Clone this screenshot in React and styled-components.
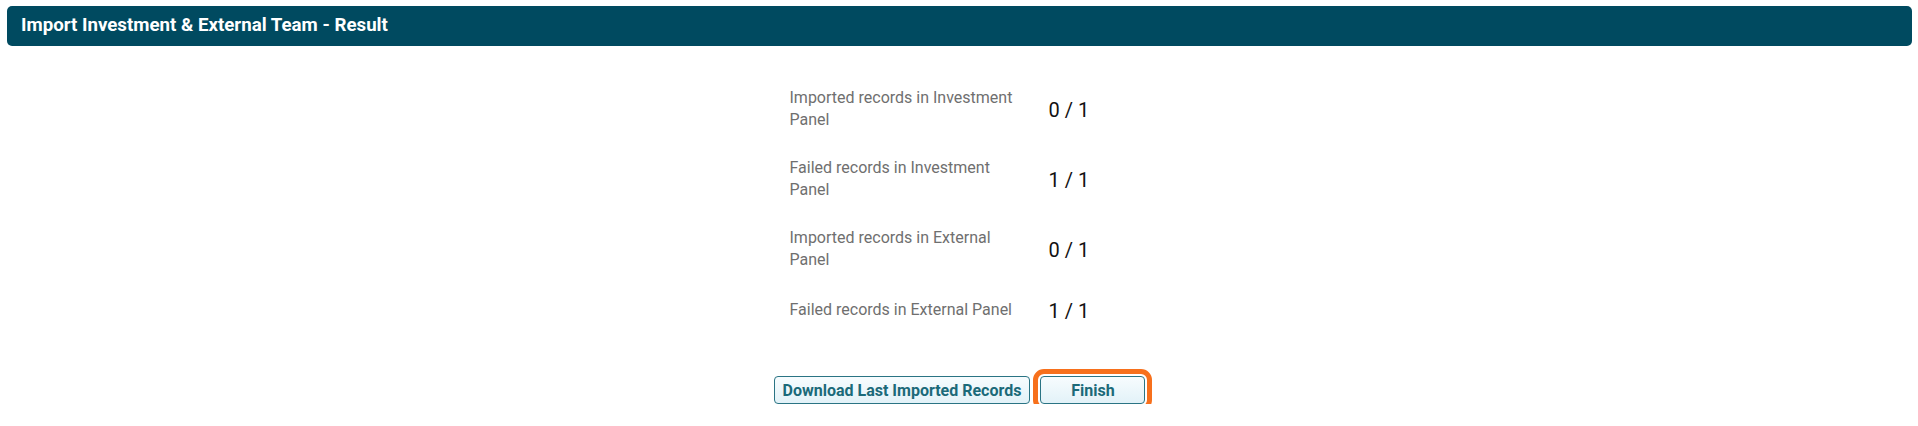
import React from "react";
import styled, { createGlobalStyle } from "styled-components";

const Global = createGlobalStyle`
  html, body { margin: 0; padding: 0; background: #ffffff; }
  body { font-family: Roboto, "Liberation Sans", Arial, sans-serif; }
  * { box-sizing: border-box; }
`;

const Page = styled.div`
  padding: 6px 6px 0 7px;
`;

const Header = styled.div`
  height: 40px;
  background: #004a60;
  border-radius: 5px;
  display: flex;
  align-items: center;
  padding: 0 14px 3px;
  color: #ffffff;
  font-weight: 700;
  font-size: 18.7px;
`;

const Results = styled.div`
  width: 340px;
  margin: 28px auto 0;
  display: flex;
  flex-direction: column;
`;

const Row = styled.div`
  display: grid;
  grid-template-columns: 259px 81px;
  align-items: center;
  padding: 13px 0;
`;

const Label = styled.div`
  width: 235px;
  font-size: 16px;
  line-height: 22px;
  color: #6f6f6f;
`;

const Value = styled.div`
  font-size: 20px;
  line-height: 24px;
  padding-top: 2px;
  color: #111111;
`;

const Actions = styled.div`
  display: flex;
  justify-content: center;
  gap: 10px;
  margin-top: 40px;
`;

const Button = styled.button`
  height: 28px;
  min-width: ${(p) => (p.$wide ? "105px" : "0")};
  padding: 0 8px;
  font-family: Roboto, "Liberation Sans", Arial, sans-serif;
  font-size: 16px;
  font-weight: 700;
  color: #1b6a79;
  background: linear-gradient(#f7fcfe, #e2f2f8);
  border: 1px solid #2a7484;
  border-radius: 4px;
  cursor: pointer;
  outline: ${(p) => (p.$focused ? "5px solid #f7701c" : "none")};
  outline-offset: 2px;
`;

const rows = [
  { label: "Imported records in Investment Panel", value: "0 / 1" },
  { label: "Failed records in Investment Panel", value: "1 / 1" },
  { label: "Imported records in External Panel", value: "0 / 1" },
  { label: "Failed records in External Panel", value: "1 / 1" },
];

export default function App() {
  return (
    <Page>
      <Global />
      <Header>Import Investment &amp; External Team - Result</Header>
      <Results>
        {rows.map((r) => (
          <Row key={r.label}>
            <Label>{r.label}</Label>
            <Value>{r.value}</Value>
          </Row>
        ))}
      </Results>
      <Actions>
        <Button>Download Last Imported Records</Button>
        <Button $wide $focused>
          Finish
        </Button>
      </Actions>
    </Page>
  );
}
